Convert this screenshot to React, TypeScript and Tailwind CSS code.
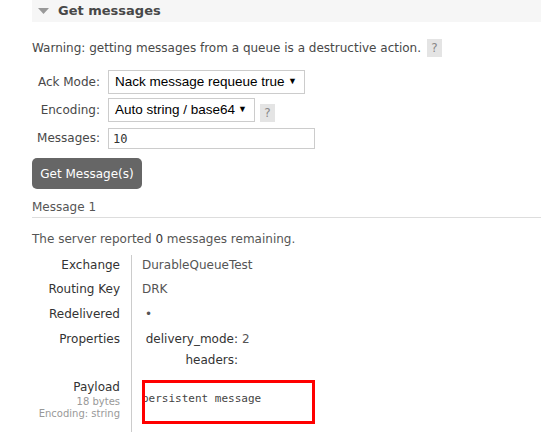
import React from "react";

function Help({ className = "" }: { className?: string }) {
  return (
    <span
      className={`inline-flex items-center justify-center w-[15px] h-[18px] bg-[#e4e4e4] text-[#888] text-[12px] ${className}`}
    >
      ?
    </span>
  );
}

function FakeSelect({ text, width }: { text: string; width: string }) {
  return (
    <div
      className={`${width} h-[24px] border border-[#ccc] bg-white flex items-center justify-between pl-[6px] pr-[7px] text-[13.5px] text-black font-['Liberation_Sans',Arial,sans-serif]`}
    >
      <span>{text}</span>
      <span className="text-[9px]">▼</span>
    </div>
  );
}

export default function App() {
  return (
    <div className="w-[541px] h-[436px] overflow-hidden bg-white text-[12px] text-[#484848] font-['DejaVu_Sans',Verdana,sans-serif]">
      <div className="ml-[32px] h-[22px] bg-[#f6f6f6] flex items-center">
        <svg width="11" height="6" viewBox="0 0 11 6" className="ml-[6px] mr-[9px]">
          <polygon points="0,0 11,0 5.5,6" fill="#999" />
        </svg>
        <span className="font-bold text-[13px] text-[#484848]">Get messages</span>
      </div>

      <div className="ml-[32px] mt-[17px] flex items-center gap-[6px]">
        <span>Warning: getting messages from a queue is a destructive action.</span>
        <Help />
      </div>

      <div className="ml-[32px] mt-[13px] grid grid-cols-[68px_auto] gap-x-[8px] gap-y-[4px] items-center w-fit">
        <span className="text-right">Ack Mode:</span>
        <FakeSelect text="Nack message requeue true" width="w-[197px]" />
        <span className="text-right">Encoding:</span>
        <div className="flex items-center gap-[5px]">
          <FakeSelect text="Auto string / base64" width="w-[147px]" />
          <Help className="mt-[5px]" />
        </div>
        <span className="text-right mt-[1px]">Messages:</span>
        <div className="mt-[2px] w-[207px] h-[21px] border border-[#ccc] flex items-center pl-[4px] text-[12px] text-[#333] font-['DejaVu_Sans_Mono','Liberation_Mono',monospace]">
          10
        </div>
      </div>

      <button className="ml-[32px] mt-[9px] w-[110px] h-[31px] rounded-[5px] bg-[#666] text-white text-[12px]">
        Get Message(s)
      </button>

      <div className="ml-[32px] mt-[11px] pb-[2px] leading-[15px] border-b border-[#ddd] text-[#555]">Message 1</div>

      <div className="ml-[32px] mt-[12px] text-[#555]">
        The server reported <span className="text-[#333]">0</span> messages remaining.
      </div>

      <div className="ml-[32px] mt-[7px] grid grid-cols-[100px_1fr]">
        <div className="pr-[11px] border-r border-[#ccc] text-right text-[#333] flex flex-col whitespace-nowrap">
          <span className="h-[25px] pt-[1px]">Exchange</span>
          <span className="h-[25px]">Routing Key</span>
          <span className="h-[25px]">Redelivered</span>
          <span className="h-[49px]">Properties</span>
          <span className="pt-[1px] leading-[15px]">Payload</span>
          <span className="text-[10px] text-[#999] leading-[13px]">18 bytes</span>
          <span className="text-[10px] text-[#999] leading-[12px] pb-[12px]">Encoding: string</span>
        </div>
        <div className="pl-[10px] flex flex-col text-[#555]">
          <span className="h-[25px] pt-[1px]">DurableQueueTest</span>
          <span className="h-[25px]">DRK</span>
          <span className="h-[25px] pl-[3px]">•</span>
          <div className="h-[50px] pl-[3px] grid grid-cols-[93px_auto] content-start gap-x-[4px] gap-y-[3px] w-fit">
            <span className="text-right text-[#333]">delivery_mode:</span>
            <span>2</span>
            <span className="text-right text-[#333]">headers:</span>
            <span></span>
          </div>
          <div className="w-[173px] h-[44px] border-[3px] border-[#f00] overflow-hidden pt-[8px]">
            <span className="block -ml-[3px] text-[11px] text-[#444] font-['DejaVu_Sans_Mono','Liberation_Mono',monospace]">
              persistent message
            </span>
          </div>
        </div>
      </div>
    </div>
  );
}
